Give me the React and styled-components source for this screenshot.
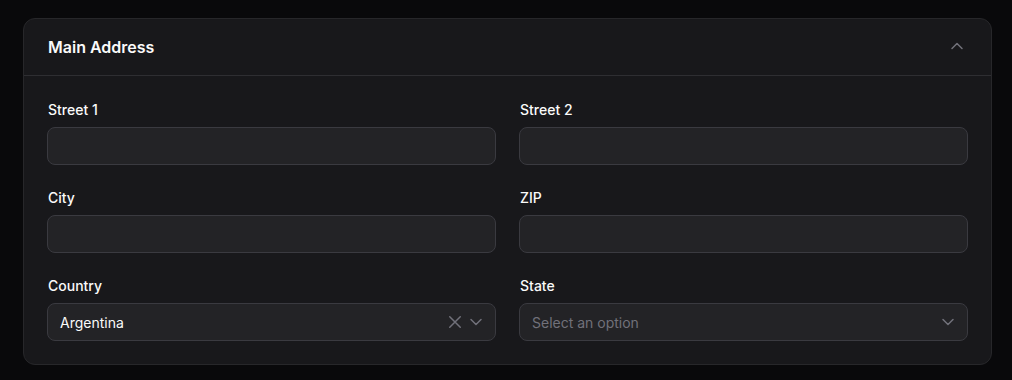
import React from 'react';
import styled, { createGlobalStyle } from 'styled-components';

const GlobalStyle = createGlobalStyle`
  html, body {
    margin: 0;
    padding: 0;
    background: #09090b;
    font-family: Inter, "Noto Sans", sans-serif;
    color: #fafafa;
  }
  * { box-sizing: border-box; }
`;

const Page = styled.div`
  padding: 18px 20px 16px 23px;
`;

const Card = styled.section`
  width: 969px;
  background: #18181b;
  border: 1px solid #27272a;
  border-radius: 12px;
`;

const Header = styled.header`
  display: flex;
  align-items: center;
  justify-content: space-between;
  height: 57px;
  padding: 0 24px;
  border-bottom: 1px solid #2e2e32;
`;

const Title = styled.h3`
  margin: 0;
  font-size: 16px;
  font-weight: 600;
  line-height: 24px;
`;

const Toggle = styled.button`
  display: flex;
  align-items: center;
  justify-content: center;
  width: 20px;
  height: 20px;
  margin-top: -3px;
  padding: 0;
  border: none;
  background: none;
  color: #71717a;
  cursor: pointer;
`;

const Body = styled.div`
  display: grid;
  grid-template-columns: 1fr 1fr;
  column-gap: 23px;
  row-gap: 23px;
  padding: 24px 23px 23px 23px;
`;

const Field = styled.div`
  display: flex;
  flex-direction: column;
  gap: 7px;
`;

const Label = styled.label`
  padding-left: 1px;
  font-size: 14px;
  font-weight: 500;
  line-height: 20px;
  color: #fafafa;
`;

const Box = styled.div`
  display: flex;
  align-items: center;
  height: 38px;
  padding: 0 9px 0 12px;
  background: #232326;
  border: 1px solid #3a3a40;
  border-radius: 8px;
`;

const Input = styled.input`
  flex: 1;
  min-width: 0;
  border: none;
  outline: none;
  background: transparent;
  color: #fafafa;
  font: inherit;
  font-size: 14px;
`;

const Value = styled.span`
  flex: 1;
  font-size: 14px;
  color: ${p => (p.$placeholder ? '#71717a' : '#fafafa')};
`;

const Icons = styled.div`
  display: flex;
  align-items: center;
  gap: 1px;
  color: #71717a;
`;

const Chevron = ({ up }) => (
  <svg width="20" height="20" viewBox="0 0 20 20" fill="none" stroke="currentColor" strokeWidth="1.5" strokeLinecap="round" strokeLinejoin="round">
    {up ? <path d="M5 12.5 10 7.5l5 5" /> : <path d="M5 7.5l5 5 5-5" />}
  </svg>
);

const Close = () => (
  <svg width="20" height="20" viewBox="0 0 20 20" fill="none" stroke="currentColor" strokeWidth="1.5" strokeLinecap="round">
    <path d="M4.75 4.75l10.5 10.5M15.25 4.75l-10.5 10.5" />
  </svg>
);

const TextField = ({ label }) => (
  <Field>
    <Label>{label}</Label>
    <Box>
      <Input type="text" />
    </Box>
  </Field>
);

const SelectField = ({ label, value, clearable }) => (
  <Field>
    <Label>{label}</Label>
    <Box>
      <Value $placeholder={!value}>{value || 'Select an option'}</Value>
      <Icons>
        {clearable && <Close />}
        <Chevron />
      </Icons>
    </Box>
  </Field>
);

export default function App() {
  return (
    <>
      <GlobalStyle />
      <Page>
        <Card>
          <Header>
            <Title>Main Address</Title>
            <Toggle aria-label="Collapse">
              <Chevron up />
            </Toggle>
          </Header>
          <Body>
            <TextField label="Street 1" />
            <TextField label="Street 2" />
            <TextField label="City" />
            <TextField label="ZIP" />
            <SelectField label="Country" value="Argentina" clearable />
            <SelectField label="State" />
          </Body>
        </Card>
      </Page>
    </>
  );
}
